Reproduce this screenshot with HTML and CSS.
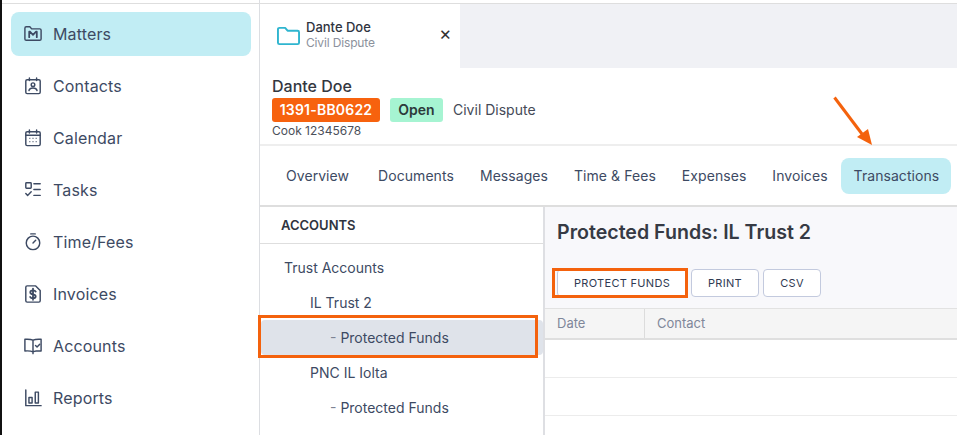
FILE: index.html
```html
<!DOCTYPE html>
<html lang="en">
<head>
<meta charset="utf-8">
<title>Protected Funds</title>
<link rel="stylesheet" href="styles.css">
</head>
<body>
<div class="app">
  <nav class="sidebar">
    <a class="nav-item active"><svg class="ico" viewBox="0 0 20 20"><path d="M1 3.500a1.500 1.500 0 0 1 1.500-1.500h4l2 2.300h9A1.500 1.500 0 0 1 19 5.800v9.700a1.500 1.500 0 0 1-1.500 1.500h-15A1.500 1.500 0 0 1 1 15.500z"/><path class="thick" d="M5.800 13.500V7.500h1L10 11l3.200-3.500h1v6"/></svg><span>Matters</span></a>
    <a class="nav-item"><svg class="ico" viewBox="0 0 20 20"><rect x="2" y="3" width="16" height="15.500" rx="1.500"/><path d="M6 1v3M14 1v3"/><circle cx="10" cy="8.500" r="2"/><path d="M5.500 15c.5-2 2-2.800 4.500-2.800s4 .8 4.500 2.800"/></svg><span>Contacts</span></a>
    <a class="nav-item"><svg class="ico" viewBox="0 0 20 20"><rect x="2" y="3" width="16" height="15.500" rx="1.500"/><path d="M6 1v3.500M14 1v3.500M2 7h16"/><path class="dots" d="M6 10.500h1M9.500 10.500h1M13 10.500h1M6 14h1M9.500 14h1M13 14h1"/></svg><span>Calendar</span></a>
    <a class="nav-item"><svg class="ico" viewBox="0 0 20 20"><rect x="2" y="2" width="6" height="6" rx=".8"/><path d="M2 14l2 2 4-4M11 3h7M11 9.500h7M11 16h7"/></svg><span>Tasks</span></a>
    <a class="nav-item"><svg class="ico" viewBox="0 0 20 20"><circle cx="10" cy="11" r="7.500"/><path d="M7.500 1h5M10 11l3-3"/></svg><span>Time/Fees</span></a>
    <a class="nav-item"><svg class="ico" viewBox="0 0 20 20"><path d="M3.500 1h9.500l5 5v11.500a1.500 1.500 0 0 1-1.500 1.500h-13A1.500 1.500 0 0 1 2 17.500v-15A1.500 1.500 0 0 1 3.500 1z"/><path class="thick" d="M13 7.300C12.500 6.300 11.500 6 10 6c-1.800 0-3 .8-3 2.200 0 3 6 1.500 6 4.400 0 1.400-1.300 2.200-3 2.200-1.600 0-2.700-.5-3.200-1.500M10 4v12.500"/></svg><span>Invoices</span></a>
    <a class="nav-item"><svg class="ico" viewBox="0 0 20 20"><path d="M10 3.500C8 2.500 4 2.300 1 2.500v13c3-.2 7 0 9 1 .9-.5 2-.8 3.500-1h5.500v-13c-3-.2-7 0-9 1zM10 3.500V18.500"/><path d="M12.800 9.500l1.700 1.700 3-3.200"/></svg><span>Accounts</span></a>
    <a class="nav-item"><svg class="ico" viewBox="0 0 20 20"><path d="M2 1v17.500h17"/><rect x="5.500" y="9.500" width="3.500" height="6"/><rect x="12.500" y="3.500" width="3.500" height="12"/></svg><span>Reports</span></a>
  </nav>
  <main class="main">
    <div class="tabbar">
      <div class="tab">
        <svg class="folder" viewBox="0 0 24 20"><path d="M2.500 1.500h6l2.500 3h10.500a1.500 1.500 0 0 1 1.500 1.500v11a1.500 1.500 0 0 1-1.500 1.500h-19A1.500 1.500 0 0 1 1 17V3a1.500 1.500 0 0 1 1.500-1.500z"/></svg>
        <div class="tab-text"><div class="tab-title">Dante Doe</div><div class="tab-sub">Civil Dispute</div></div>
        <span class="tab-close">×</span>
      </div>
    </div>
    <header class="matter">
      <div class="matter-name">Dante Doe</div>
      <div class="matter-tags"><span class="tag-code">1391-BB0622</span><span class="tag-open">Open</span><span class="matter-type">Civil Dispute</span></div>
      <div class="matter-ref">Cook 12345678</div>
    </header>
    <div class="tabs">
      <a class="tabs-item tabs-first">Overview</a>
      <a class="tabs-item">Documents</a>
      <a class="tabs-item">Messages</a>
      <a class="tabs-item">Time &amp; Fees</a>
      <a class="tabs-item">Expenses</a>
      <a class="tabs-item">Invoices</a>
      <a class="tabs-item selected">Transactions</a>
    </div>
    <div class="content">
      <aside class="accounts">
        <div class="accounts-head">ACCOUNTS</div>
        <div class="tree">
          <div class="tree-row">Trust Accounts</div>
          <div class="tree-row lvl2">IL Trust 2</div>
          <div class="tree-row lvl3 current"><span class="dash">-</span> Protected Funds</div>
          <div class="tree-row lvl2">PNC IL Iolta</div>
          <div class="tree-row lvl3"><span class="dash">-</span> Protected Funds</div>
        </div>
      </aside>
      <section class="panel">
        <div class="panel-top">
          <h1 class="panel-title">Protected Funds: IL Trust 2</h1>
          <div class="actions">
            <button class="btn btn-protect">PROTECT FUNDS</button>
            <button class="btn btn-print">PRINT</button>
            <button class="btn btn-csv">CSV</button>
          </div>
        </div>
        <div class="table">
          <div class="thead"><div class="th th-date">Date</div><div class="th">Contact</div></div>
          <div class="trow"></div>
          <div class="trow"></div>
          <div class="trow"></div>
        </div>
      </section>
    </div>
  </main>
</div>
<div class="mark-row"></div>
<div class="mark-btn"></div>
<svg class="arrow" viewBox="0 0 40 50"><path d="M1.500 1.500L29 38"/><polygon points="39,49 24,41 35,33"/></svg>
</body>
</html>
```

FILE: styles.css
```css
* { box-sizing: border-box; }
html, body { margin: 0; padding: 0; }
body {
  width: 957px; height: 435px; overflow: hidden; position: relative;
  background: #fff; color: #3d4a63;
  font-family: Inter, "Liberation Sans", sans-serif;
  font-size: 14px;
}
.app {
  height: 435px; display: flex;
  border-left: 2px solid #111;
  background: #fff;
}
.app::before {
  content: ""; position: absolute; left: 2px; right: 0; top: 3px; height: 1px; background: #dedede;
}
.sidebar {
  width: 258px; flex: none; padding: 12px 8px 0 9px;
  display: flex; flex-direction: column; gap: 8px;
  border-right: 1px solid #dcdee2;
}
.nav-item {
  height: 44px; flex: none; display: flex; align-items: center; gap: 11px;
  padding-left: 13px; border-radius: 8px;
  font-size: 16px; line-height: 20px; letter-spacing: .15px; color: #3d4a63;
}
.nav-item.active { background: #c1edf4; }
.ico { width: 18px; height: 18px; flex: none; fill: none; stroke: #3d4a63; stroke-width: 1.600; stroke-linecap: round; stroke-linejoin: round; }
.ico .thick { stroke-width: 2; }
.ico .dots { stroke-width: 1.400; stroke-linecap: butt; }
.main { flex: 1; min-width: 0; display: flex; flex-direction: column; }
.tabbar { height: 68px; flex: none; padding-top: 4px; display: flex; background: linear-gradient(#fff 4px, #f0f1f5 4px); }
.tab {
  width: 200px; height: 64px; background: #fff; display: flex; align-items: center;
  padding-left: 17px; position: relative;
}
.folder { width: 23px; height: 20px; flex: none; fill: none; stroke: #2fb5cf; stroke-width: 2; stroke-linejoin: round; margin-top: -1px; }
.tab-text { margin-left: 6px; margin-top: -2px; }
.tab-title { font-size: 13px; line-height: 16px; font-weight: 500; color: #2f3440; }
.tab-sub { font-size: 12px; line-height: 16px; letter-spacing: -.15px; color: #8c919c; }
.tab-close { position: absolute; left: 179px; top: 18px; font-size: 19px; line-height: 24px; color: #333; }
.matter { height: 78px; flex: none; padding: 8px 12px 0; border-bottom: 2px solid #eeeeee; }
.matter-name { font-size: 16px; line-height: 20px; font-weight: 500; color: #33373f; }
.matter-tags { display: flex; align-items: center; height: 24px; margin-top: 2px; }
.tag-code {
  width: 108px; height: 24px; border-radius: 3px; background: #f7620e; color: #fff;
  font-size: 14px; line-height: 24px; font-weight: 600; letter-spacing: .2px; text-align: center;
}
.tag-open {
  width: 53px; height: 24px; border-radius: 3px; background: #a6f4d2; color: #2c3a3a; margin-left: 10px;
  font-size: 14px; line-height: 24px; font-weight: 600; text-align: center;
}
.matter-type { margin-left: 10px; font-size: 14px; line-height: 24px; height: 24px; color: #454a57; }
.matter-ref { font-size: 12px; line-height: 16px; margin-top: 1px; color: #4b4f5a; }
.tabs { height: 61px; flex: none; display: flex; align-items: center; padding: 1px 0 0 13px; border-bottom: 2px solid #dedede; }
.tabs-item { height: 36px; line-height: 36px; font-size: 14px; letter-spacing: .06px; padding: 0 13px; border-radius: 8px; color: #3d4a63; white-space: nowrap; }
.tabs-first { margin-right: 3px; }
.tabs-item.selected { background: #c1edf4; padding-right: 12px; }
.content { flex: 1; display: flex; min-height: 0; }
.accounts { width: 285px; flex: none; border-right: 2px solid #dedfe3; }
.accounts-head { height: 37px; line-height: 37px; padding-left: 21px; font-size: 13px; font-weight: 600; color: #2f3440; border-bottom: 1px solid #dedede; }
.tree { padding-top: 6px; }
.tree-row { height: 35px; line-height: 35px; padding-left: 24px; font-size: 14px; color: #3d4a63; }
.tree-row.lvl2 { padding-left: 50px; }
.tree-row.lvl3 { padding-left: 70px; }
.tree-row.current { background: #dfe3ea; border-radius: 4px; margin-left: 1px; padding-left: 69px; }
.dash { color: #7d8494; }
.panel { flex: 1; min-width: 0; display: flex; flex-direction: column; }
.panel-top { height: 101px; flex: none; background: #f8f8fb; padding: 13px 0 0 12px; }
.panel-title { margin: 0; font-size: 19.600px; line-height: 24px; font-weight: 600; color: #363a44; }
.actions { display: flex; gap: 4px; margin-top: 25px; height: 28px; }
.btn {
  height: 28px; border: 1px solid #c3cade; border-radius: 4px; background: #fff; color: #2f3a52;
  font-family: Inter, "Liberation Sans", sans-serif; font-size: 11px; letter-spacing: .3px; padding: 0;
}
.btn-protect { width: 130px; }
.btn-print { width: 68px; }
.btn-csv { width: 58px; }
.thead { height: 32px; display: flex; background: #f5f5f5; border-top: 1px solid #e2e2e2; border-bottom: 2px solid #dfdfdf; }
.th { line-height: 29px; font-size: 13px; color: #7f879a; padding-left: 12px; }
.th-date { width: 100px; border-right: 1px solid #dcdcdc; }
.trow { height: 38px; border-bottom: 1px solid #ececec; }
.mark-row { position: absolute; left: 258px; top: 315px; width: 280px; height: 43px; border: 3px solid #f4620d; }
.mark-btn { position: absolute; left: 552px; top: 268px; width: 136px; height: 30px; border: 3px solid #f4620d; }
.arrow { position: absolute; left: 833px; top: 96px; width: 40px; height: 50px; fill: #f4620d; stroke: none; }
.arrow path { fill: none; stroke: #f4620d; stroke-width: 3; }
```
